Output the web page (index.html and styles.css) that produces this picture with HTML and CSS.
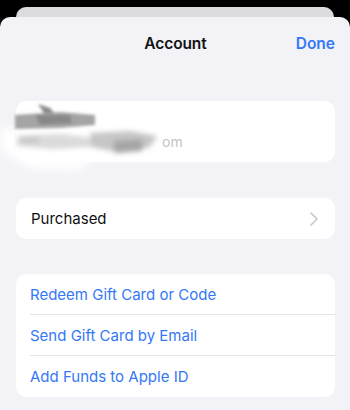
FILE: index.html
```html
<!DOCTYPE html>
<html>
<head>
<meta charset="utf-8">
<link rel="stylesheet" href="styles.css">
</head>
<body>
<div class="screen">
  <div class="back-card"></div>
  <div class="sheet">
    <div class="navbar">
      <span class="nav-side"></span>
      <span class="title">Account</span>
      <span class="nav-side done">Done</span>
    </div>
    <div class="card profile">
      <svg class="redact" width="200" height="90" viewBox="0 0 200 90">
        <defs>
          <filter id="b1" x="-30%" y="-80%" width="160%" height="260%"><feGaussianBlur stdDeviation="1.8"/></filter>
          <filter id="b2" x="-30%" y="-80%" width="160%" height="260%"><feGaussianBlur stdDeviation="2.6"/></filter>
          <filter id="b3" x="-30%" y="-80%" width="160%" height="260%"><feGaussianBlur stdDeviation="5"/></filter>
        </defs>
        <g filter="url(#b3)">
          <path d="M0 36 L40 40 L100 60 L80 80 L30 78 L0 60 Z" fill="#ffffff"/>
        </g>
        <g filter="url(#b1)">
          <path d="M15 24 L60 21 L95 24 L95 34 L60 37 L15 38 Z" fill="#a4a4a4"/>
          <path d="M38 13 L50 17 L54 22 L44 22 Z" fill="#8a8a8a"/>
          <path d="M35 24 L70 24 L72 32 L40 34 Z" fill="#888"/>
        </g>
        <g filter="url(#b2)">
          <path d="M17 45 L60 43 L95 47 L92 56 L50 58 L17 55 Z" fill="#dadada"/>
          <path d="M20 46 L40 45 L38 52 L20 52 Z" fill="#c8c8c8"/>
          <path d="M90 42 L130 40 L157 45 L150 56 L120 62 L92 56 Z" fill="#c6c6c6"/>
          <path d="M113 50 L143 48 L142 60 L115 62 Z" fill="#a6a6a6"/>
        </g>
        <text x="162" y="56" class="om">om</text>
      </svg>
    </div>
    <div class="card list single">
      <div class="row">
        <span class="label">Purchased</span>
        <svg class="chev" width="8" height="14" viewBox="0 0 8 14"><path d="M1 1 L7 7 L1 13" fill="none" stroke="#c4c4c7" stroke-width="1.5" stroke-linecap="round" stroke-linejoin="round"/></svg>
      </div>
    </div>
    <div class="card list group">
      <div class="row link">Redeem Gift Card or Code</div>
      <div class="row link">Send Gift Card by Email</div>
      <div class="row link">Add Funds to Apple ID</div>
    </div>
  </div>
</div>
</body>
</html>
```
FILE: styles.css
```css
html, body {
  margin: 0;
  padding: 0;
  background: #000;
}
.screen {
  width: 350px;
  height: 410px;
  overflow: hidden;
  background: #000;
  font-family: Inter, "Noto Sans", sans-serif;
  display: flex;
  flex-direction: column;
  align-items: center;
  padding-top: 7px;
  box-sizing: border-box;
}
.back-card {
  width: 318px;
  height: 20px;
  background: #dcdcde;
  border-radius: 10px 10px 0 0;
  flex-shrink: 0;
}
.sheet {
  margin-top: -10px;
  width: 350px;
  flex: 1;
  background: #f2f2f7;
  border-radius: 10px 10px 0 0;
  box-sizing: border-box;
  padding: 0 15px 0 16px;
  display: flex;
  flex-direction: column;
}
.navbar {
  height: 51px;
  display: flex;
  align-items: center;
  justify-content: space-between;
  padding-top: 1px;
  box-sizing: border-box;
}
.nav-side {
  width: 60px;
}
.title {
  font-size: 15.5px;
  font-weight: 600;
  color: #111;
  letter-spacing: -0.1px;
}
.done {
  text-align: right;
  color: #3478f6;
  font-size: 15.5px;
  font-weight: 600;
}
.card {
  background: #fff;
  border-radius: 10px;
}
.list {
  overflow: hidden;
}
.profile {
  margin-top: 33px;
  height: 61px;
}
.redact {
  display: block;
  margin-top: -10px;
  margin-left: -16px;
  overflow: visible;
}
.om {
  font-family: Inter, sans-serif;
  font-size: 14px;
  fill: #c4c4c4;
}
.single {
  margin-top: 36px;
}
.single .row {
  height: 41px;
  display: flex;
  align-items: center;
  justify-content: space-between;
  padding: 0 17px 0 15px;
}
.label {
  font-size: 15px;
  color: #111;
}
.chev {
  display: block;
}
.group {
  margin-top: 35px;
  padding-left: 15px;
}
.group .row {
  height: 40px;
  display: flex;
  align-items: center;
  font-size: 15px;
  color: #3478f6;
  border-bottom: 1px solid #e3e3e6;
  margin-left: -1px;
}
.group .row:last-child {
  border-bottom: none;
  height: 41px;
}
```
